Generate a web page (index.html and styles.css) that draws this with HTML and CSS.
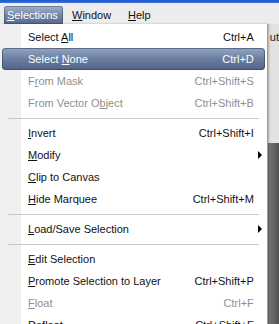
FILE: index.html
```html
<!DOCTYPE html>
<html lang="en">
<head>
    <meta charset="UTF-8">
    <title>Selections menu</title>
    <link rel="stylesheet" href="styles.css">
</head>
<body>
    <div class="titlebar"></div>
    <div class="menubar">
        <span class="menubar-item open"><u>S</u>elections</span>
        <span class="menubar-item"><u>W</u>indow</span>
        <span class="menubar-item"><u>H</u>elp</span>
    </div>
    <div class="workspace">
        <!-- Dropdown -->
        <div class="menu">
            <div class="item"><span>Select <u>A</u>ll</span><span class="key">Ctrl+A</span></div>
            <div class="item active"><span>Select <u>N</u>one</span><span class="key">Ctrl+D</span></div>
            <div class="item disabled"><span>F<u>r</u>om Mask</span><span class="key">Ctrl+Shift+S</span></div>
            <div class="item disabled"><span>From Vector O<u>b</u>ject</span><span class="key">Ctrl+Shift+B</span></div>
            <div class="sep"></div>
            <div class="item"><span><u>I</u>nvert</span><span class="key">Ctrl+Shift+I</span></div>
            <div class="item sub"><span><u>M</u>odify</span></div>
            <div class="item"><span><u>C</u>lip to Canvas</span></div>
            <div class="item"><span><u>H</u>ide Marquee</span><span class="key">Ctrl+Shift+M</span></div>
            <div class="sep"></div>
            <div class="item sub"><span><u>L</u>oad/Save Selection</span></div>
            <div class="sep"></div>
            <div class="item"><span><u>E</u>dit Selection</span></div>
            <div class="item"><span><u>P</u>romote Selection to Layer</span><span class="key">Ctrl+Shift+P</span></div>
            <div class="item disabled"><span><u>F</u>loat</span><span class="key">Ctrl+F</span></div>
            <div class="item"><span><u>D</u>efloat</span><span class="key">Ctrl+Shift+F</span></div>
        </div>
        <div class="side">
            <div class="side-top">ut</div>
            <div class="side-bottom"></div>
        </div>
    </div>
</body>
</html>
```

FILE: styles.css
```css
body {
    margin: 0;
    width: 279px;
    height: 324px;
    overflow: hidden;
    font-family: "Liberation Sans", Arial, sans-serif;
    font-size: 11px;
    color: #111;
    background-color: #e6e6e6;
}
u {
    text-decoration: underline;
    text-underline-offset: 1px;
}
.titlebar {
    height: 3px;
    background: linear-gradient(#1d55c8, #3b74dc);
}
.menubar {
    height: 21px;
    display: flex;
    align-items: center;
    background-color: #ececec;
    padding-left: 4px;
}
.menubar-item {
    height: 18px;
    line-height: 18px;
    padding: 0 8px 0 3px;
    margin-right: 1px;
    margin-top: 2px;
}
.menubar-item.open {
    width: 48px;
    color: #fff;
    border-radius: 3px 3px 0 0;
    background: linear-gradient(#a3b1c9, #6c7fa0 60%, #586b8f);
    box-shadow: inset 0 0 0 1px rgba(60, 75, 105, 0.5);
    margin-right: 6px;
}
.menubar-item:nth-child(2) {
    width: 44px;
}
.workspace {
    display: flex;
}
.menu {
    width: 266px;
    padding: 2px 2px;
    background: linear-gradient(to right, #efefef 21px, #fff 21px);
    border-right: 1px solid #9c9c9c;
    box-shadow: 1px 0 2px rgba(0, 0, 0, 0.25);
    position: relative;
    z-index: 2;
}
.item {
    height: 22px;
    display: flex;
    align-items: center;
    justify-content: space-between;
    padding: 0 11px 0 26px;
    white-space: nowrap;
}
.item.active {
    color: #fff;
    border-radius: 4px;
    background: linear-gradient(#94a5c2, #6b7ea0 50%, #4f638a);
    box-shadow: inset 0 0 0 1px rgba(50, 65, 95, 0.6);
}
.item.disabled {
    color: #8f8f8f;
}
.item.sub::after {
    content: "";
    border-left: 4px solid #000;
    border-top: 4px solid transparent;
    border-bottom: 4px solid transparent;
    margin-right: -8px;
}
.sep {
    height: 8px;
    display: flex;
    align-items: center;
    padding: 0 6px;
}
.sep::before {
    content: "";
    flex: 1;
    height: 1px;
    background-color: #c8c8c8;
}
.side {
    flex: 1;
    display: flex;
    flex-direction: column;
}
.side-top {
    height: 112px;
    padding-top: 7px;
    padding-left: 2px;
    background-color: #e2e2e2;
    color: #222;
}
.side-bottom {
    flex: 1;
    background: linear-gradient(to right, #7a7a7a, #505050);
}
```
